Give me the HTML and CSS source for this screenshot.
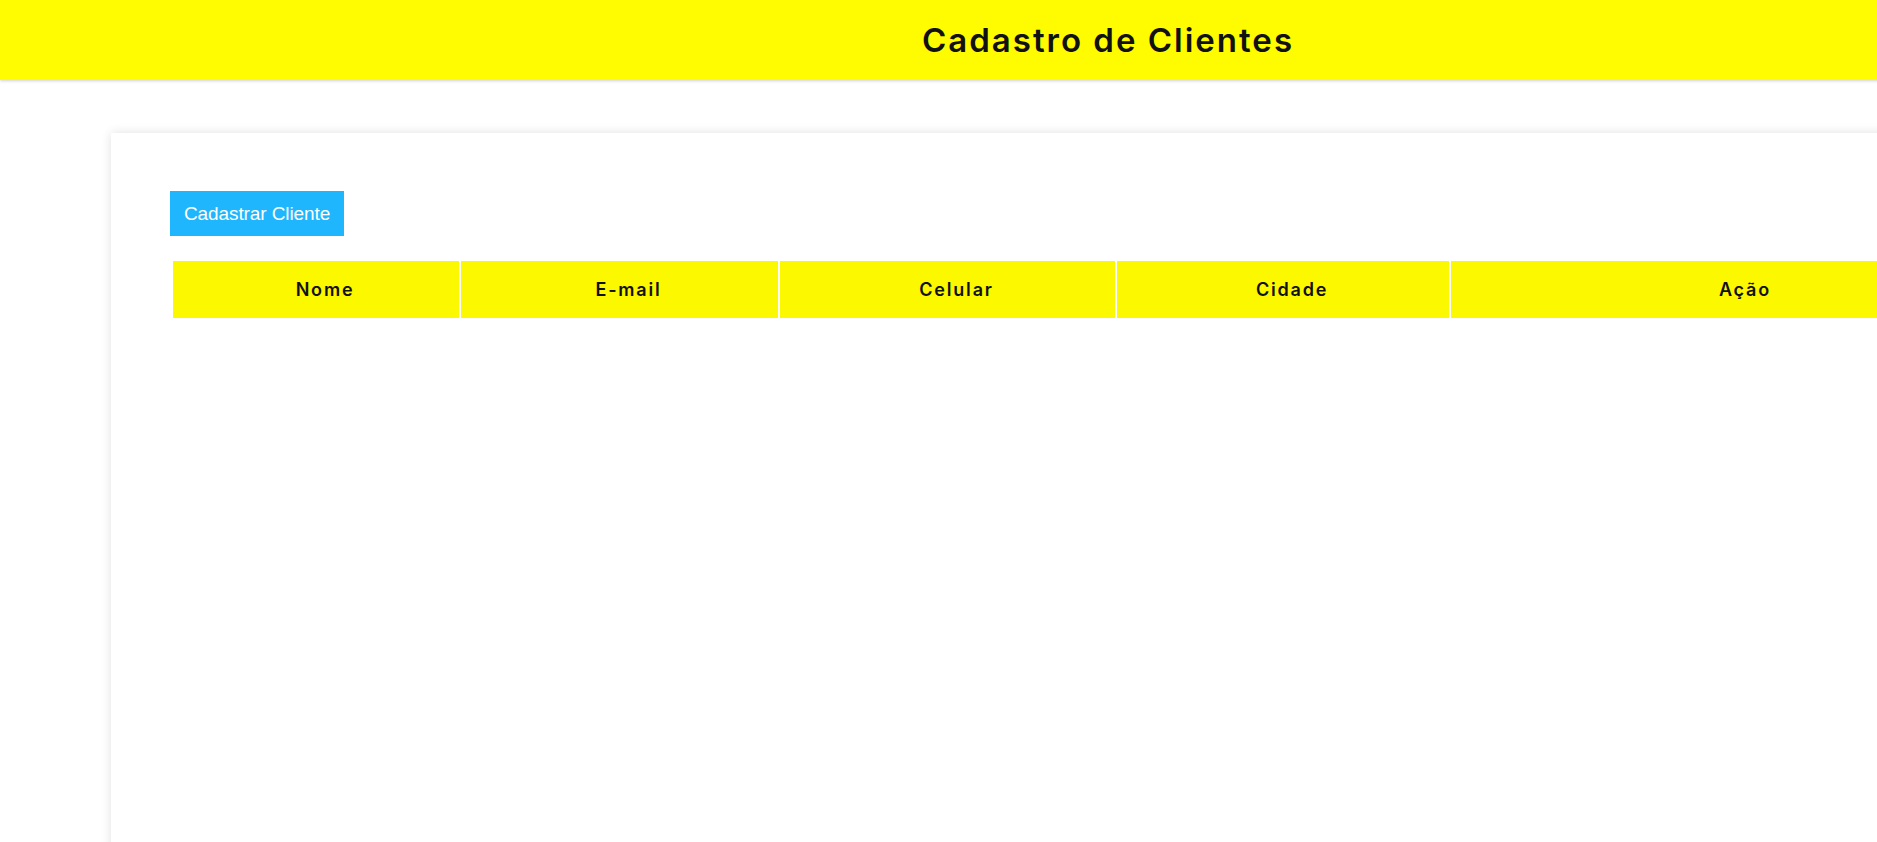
FILE: index.html
```html
<!DOCTYPE html>
<html lang="pt-BR">
<head>
<meta charset="utf-8">
<title>Cadastro de Clientes</title>
<link rel="stylesheet" href="styles.css">
</head>
<body>
<div class="page">
  <header class="topbar">
    <h1 class="title">Cadastro de Clientes</h1>
  </header>
  <main class="card">
    <button class="btn-add" type="button">Cadastrar Cliente</button>
    <table class="clients">
      <colgroup>
        <col class="c-nome">
        <col class="c-email">
        <col class="c-cel">
        <col class="c-cid">
        <col class="c-acao">
      </colgroup>
      <thead>
        <tr>
          <th>Nome</th>
          <th>E-mail</th>
          <th>Celular</th>
          <th>Cidade</th>
          <th>Ação</th>
        </tr>
      </thead>
      <tbody></tbody>
    </table>
  </main>
</div>
</body>
</html>
```
FILE: styles.css
```css
html, body {
  margin: 0;
  padding: 0;
  background: #ffffff;
}

body {
  font-family: Inter, "Noto Sans", "Liberation Sans", sans-serif;
  color: #111111;
}

.page {
  width: 2216px;
}

.topbar {
  height: 80px;
  background: #fffb00;
  display: flex;
  align-items: center;
  justify-content: center;
  box-shadow: 0 1px 3px rgba(0, 0, 0, 0.18);
  position: relative;
  z-index: 1;
}

.title {
  margin: 0;
  font-size: 33px;
  font-weight: 600;
  letter-spacing: 2px;
  color: #111111;
  line-height: 1;
}

.card {
  margin: 53px 111px 0;
  padding: 58px 59px;
  min-height: 760px;
  background: #ffffff;
  box-shadow: 0 0 10px rgba(0, 0, 0, 0.12);
}

.btn-add {
  display: block;
  height: 45px;
  padding: 0 14px;
  border: none;
  background: #1fb6fe;
  color: #ffffff;
  font-family: "Liberation Sans", Arial, sans-serif;
  font-size: 19px;
  letter-spacing: -0.1px;
  cursor: pointer;
}

.clients {
  margin: 23px 0 0 1px;
  border-collapse: separate;
  border-spacing: 2px;
  table-layout: fixed;
  width: 1852px;
}

.c-nome { width: 286px; }
.c-email { width: 317px; }
.c-cel { width: 335px; }
.c-cid { width: 332px; }
.c-acao { width: 570px; }

.clients th {
  height: 57px;
  padding: 0 0 0 18px;
  background: #fcf800;
  font-size: 18px;
  font-weight: 600;
  letter-spacing: 1.8px;
  text-align: center;
  color: #111111;
}
```
